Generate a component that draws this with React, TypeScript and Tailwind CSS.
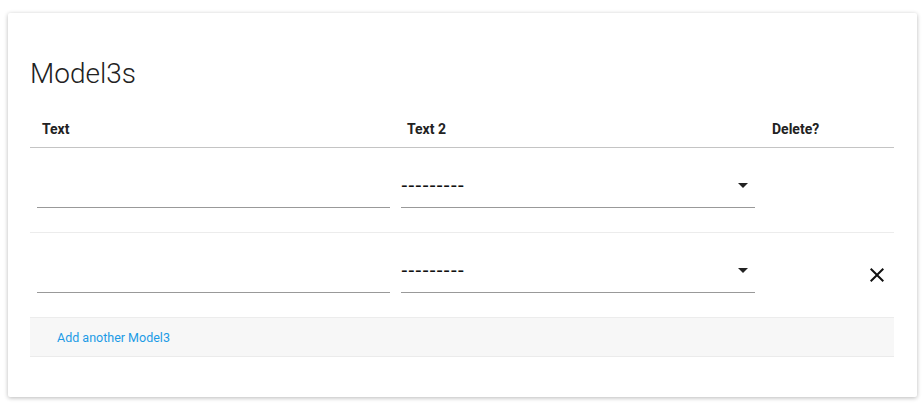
import React from "react";

const ArrowDrop = () => (
  <svg width="24" height="24" viewBox="0 0 24 24" className="absolute right-0 top-[-3px] fill-[#222]">
    <path d="M7 10l5 5 5-5z" />
  </svg>
);

const CloseIcon = () => (
  <svg width="24" height="24" viewBox="0 0 24 24" className="fill-[#111]">
    <path d="M19 6.41L17.59 5 12 10.59 6.41 5 5 6.41 10.59 12 5 17.59 6.41 19 12 13.41 17.59 19 19 17.59 13.41 12z" />
  </svg>
);

function Row({ deletable }: { deletable?: boolean }) {
  return (
    <tr className="border-b border-[#ececec]">
      <td className="pl-[7px] pr-[5px] pt-[28px] pb-[24px] align-top">
        <input
          type="text"
          className="block h-8 w-full border-b border-[#999] bg-transparent text-base outline-none"
        />
      </td>
      <td className="pl-[6px] pr-[5px] pt-[28px] pb-[24px] align-top">
        <div className="relative h-8 border-b border-[#999]">
          <span className="block font-['Liberation_Sans',sans-serif] text-[20px] leading-[18px] tracking-[0.4px] text-[#111]">
            ---------
          </span>
          <ArrowDrop />
        </div>
      </td>
      <td className="pr-[5px] align-middle">
        {deletable && (
          <div className="flex justify-end">
            <CloseIcon />
          </div>
        )}
      </td>
    </tr>
  );
}

export default function App() {
  return (
    <div className="min-h-screen bg-white pt-[13px] pl-2 font-['Roboto',sans-serif] text-[#222]">
      <div className="w-[909px] rounded-[2px] bg-white pt-[43px] pr-[23px] pb-10 pl-[22px] shadow-[0_1px_4px_rgba(0,0,0,0.28)]">
        <h1 className="text-[28px] leading-9 font-light">Model3s</h1>
        <table className="mt-[15px] w-full table-fixed border-collapse">
          <colgroup>
            <col className="w-[365px]" />
            <col className="w-[365px]" />
            <col />
          </colgroup>
          <thead>
            <tr className="border-b border-[#c4c4c4]">
              <th className="px-3 pt-3 pb-2 text-left text-sm leading-5 font-bold">Text</th>
              <th className="px-3 pt-3 pb-2 text-left text-sm leading-5 font-bold">Text 2</th>
              <th className="px-3 pt-3 pb-2 text-left text-sm leading-5 font-bold">Delete?</th>
            </tr>
          </thead>
          <tbody>
            <Row />
            <Row deletable />
            <tr className="border-y border-[#ebebeb] bg-[#f7f7f7]">
              <td colSpan={3} className="h-[39px] pl-[27px] align-middle">
                <a href="#" className="text-[12.5px] text-[#1c9be6]">
                  Add another Model3
                </a>
              </td>
            </tr>
          </tbody>
        </table>
      </div>
    </div>
  );
}
